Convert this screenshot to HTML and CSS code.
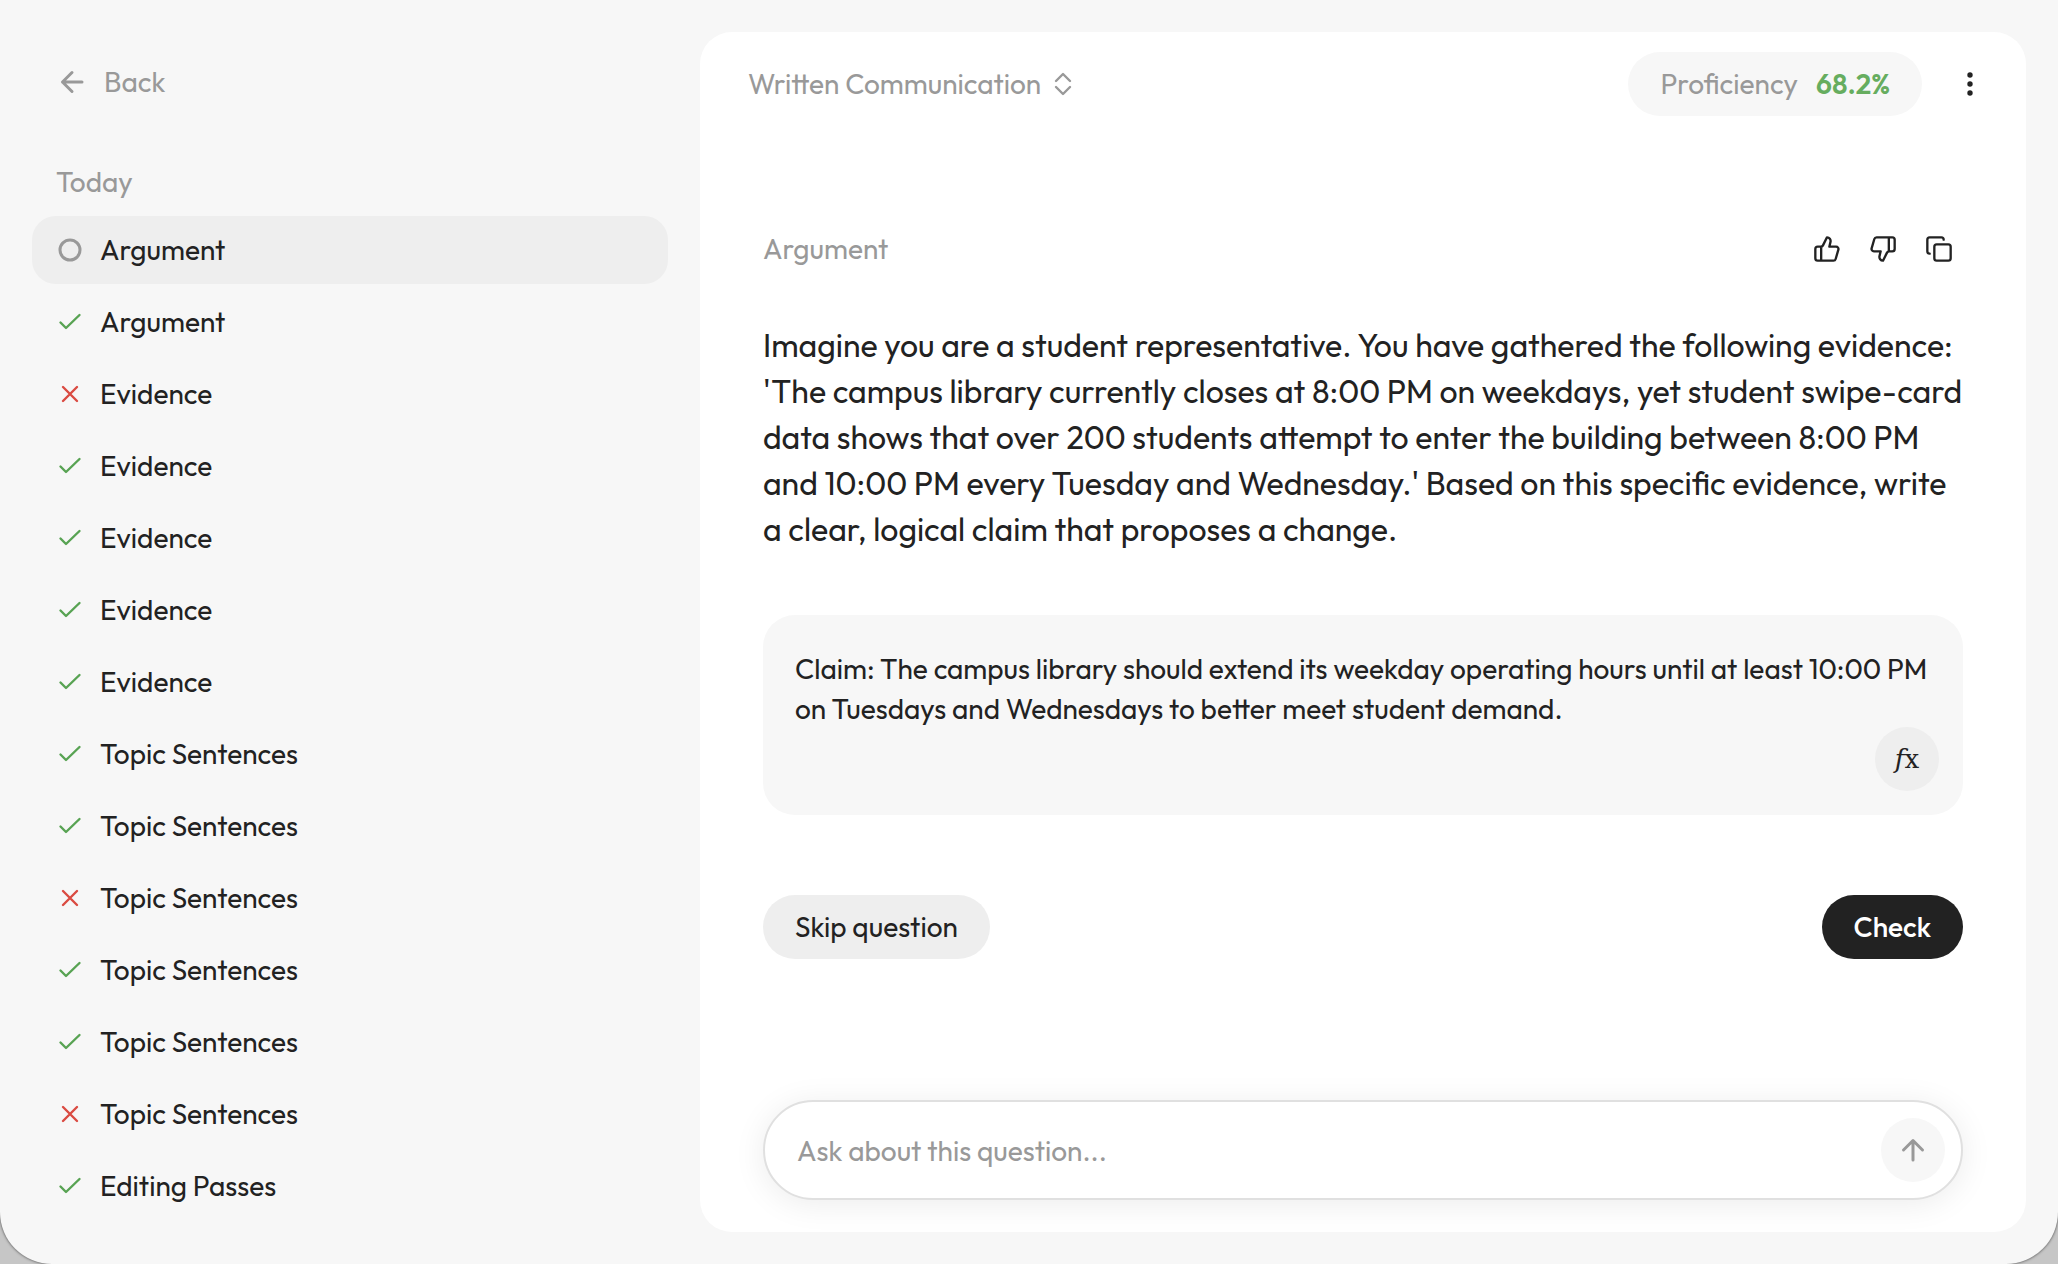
FILE: index.html
```html
<!DOCTYPE html>
<html lang="en">
<head>
<meta charset="utf-8">
<meta name="viewport" content="width=device-width, initial-scale=1">
<title>Written Communication</title>
<link rel="stylesheet" href="styles.css">
</head>
<body>
<svg class="sprite" aria-hidden="true">
  <symbol id="check" viewBox="0 0 28 28"><path d="M4.500 14.500 10 20 23.500 7"/></symbol>
  <symbol id="cross" viewBox="0 0 28 28"><path d="M7 7 21 21M21 7 7 21"/></symbol>
  <symbol id="ring" viewBox="0 0 28 28"><circle cx="14" cy="14" r="10"/></symbol>
</svg>
<div class="app">
  <aside class="sidebar">
    <a class="back" href="#">
      <svg class="icon" viewBox="0 0 28 28" aria-hidden="true"><path d="M24 14H4.500M14 4.500 4.500 14l9.500 9.500"/></svg>
      Back
    </a>
    <h2 class="group">Today</h2>
    <nav class="history" aria-label="Today">
      <a class="item current" href="#"><svg class="icon"><use href="#ring"/></svg>Argument</a>
      <a class="item right" href="#"><svg class="icon"><use href="#check"/></svg>Argument</a>
      <a class="item wrong" href="#"><svg class="icon"><use href="#cross"/></svg>Evidence</a>
      <a class="item right" href="#"><svg class="icon"><use href="#check"/></svg>Evidence</a>
      <a class="item right" href="#"><svg class="icon"><use href="#check"/></svg>Evidence</a>
      <a class="item right" href="#"><svg class="icon"><use href="#check"/></svg>Evidence</a>
      <a class="item right" href="#"><svg class="icon"><use href="#check"/></svg>Evidence</a>
      <a class="item right" href="#"><svg class="icon"><use href="#check"/></svg>Topic Sentences</a>
      <a class="item right" href="#"><svg class="icon"><use href="#check"/></svg>Topic Sentences</a>
      <a class="item wrong" href="#"><svg class="icon"><use href="#cross"/></svg>Topic Sentences</a>
      <a class="item right" href="#"><svg class="icon"><use href="#check"/></svg>Topic Sentences</a>
      <a class="item right" href="#"><svg class="icon"><use href="#check"/></svg>Topic Sentences</a>
      <a class="item wrong" href="#"><svg class="icon"><use href="#cross"/></svg>Topic Sentences</a>
      <a class="item right" href="#"><svg class="icon"><use href="#check"/></svg>Editing Passes</a>
    </nav>
  </aside>
  <main class="panel">
    <header class="topbar">
      <button class="subject" type="button">
        Written Communication
        <svg class="icon" viewBox="0 0 28 28" aria-hidden="true"><path d="M7 11l7-7 7 7M7 17l7 7 7-7"/></svg>
      </button>
      <div class="proficiency">Proficiency <strong>68.2%</strong></div>
      <button class="menu" type="button" aria-label="More options">
        <svg class="dots" viewBox="0 0 32 32" aria-hidden="true"><circle cx="16" cy="7" r="2.700"/><circle cx="16" cy="16" r="2.700"/><circle cx="16" cy="25" r="2.700"/></svg>
      </button>
    </header>
    <div class="content">
      <div class="question-head">
        <h1 class="topic">Argument</h1>
        <button class="tool" type="button" aria-label="Good question"><svg class="icon" viewBox="0 0 24 24" aria-hidden="true"><path d="M7 10v12M15 5.880 14 10h5.830a2 2 0 0 1 1.920 2.560l-2.330 8A2 2 0 0 1 17.500 22H4a2 2 0 0 1-2-2v-8a2 2 0 0 1 2-2h2.760a2 2 0 0 0 1.790-1.110L12 2a3.130 3.130 0 0 1 3 3.880Z"/></svg></button>
        <button class="tool" type="button" aria-label="Bad question"><svg class="icon" viewBox="0 0 24 24" aria-hidden="true"><path d="M17 14V2M9 18.120 10 14H4.170a2 2 0 0 1-1.920-2.560l2.330-8A2 2 0 0 1 6.500 2H20a2 2 0 0 1 2 2v8a2 2 0 0 1-2 2h-2.760a2 2 0 0 0-1.790 1.110L12 22a3.130 3.130 0 0 1-3-3.880Z"/></svg></button>
        <button class="tool" type="button" aria-label="Copy question"><svg class="icon" viewBox="0 0 24 24" aria-hidden="true"><rect x="8" y="8" width="14" height="14" rx="2"/><path d="M4 16a2 2 0 0 1-2-2V4a2 2 0 0 1 2-2h10a2 2 0 0 1 2 2"/></svg></button>
      </div>
      <p class="question">Imagine you are a student representative. You have gathered the following evidence: 'The campus library currently closes at 8:00 PM on weekdays, yet student swipe-card data shows that over 200 students attempt to enter the building between 8:00 PM and 10:00 PM every Tuesday and Wednesday.' Based on this specific evidence, write a clear, logical claim that proposes a change.</p>
      <div class="answer">
        <textarea class="answer-text" aria-label="Your answer">Claim: The campus library should extend its weekday operating hours until at least 10:00 PM on Tuesdays and Wednesdays to better meet student demand.</textarea>
        <button class="formula" type="button" aria-label="Insert formula"><i>f</i>x</button>
      </div>
      <div class="actions">
        <button class="pill skip" type="button">Skip question</button>
        <button class="pill submit" type="button">Check</button>
      </div>
      <form class="ask">
        <input class="ask-input" type="text" aria-label="Ask about this question" placeholder="Ask about this question...">
        <button class="send" type="button" aria-label="Send"><svg class="icon" viewBox="0 0 28 28" aria-hidden="true"><path d="M14 24V4.500M4.500 14 14 4.500l9.500 9.500"/></svg></button>
      </form>
    </div>
  </main>
</div>
</body>
</html>
```
FILE: styles.css
```css
* { box-sizing: border-box; }
body {
  margin: 0;
  background: #c6c6c6;
  color: #222;
  font: 28px/40px Outfit, Lato, sans-serif;
}
button, input, textarea {
  margin: 0;
  padding: 0;
  border: 0;
  background: none;
  color: inherit;
  font: inherit;
}
button { cursor: pointer; }
a { color: inherit; text-decoration: none; }
h1, h2, p { margin: 0; font-weight: 400; }
.sprite { display: none; }
.icon {
  flex: none;
  width: 28px;
  height: 28px;
  fill: none;
  stroke: currentColor;
  stroke-width: 3;
  stroke-linecap: round;
  stroke-linejoin: round;
}
.app {
  display: flex;
  min-height: 100vh;
  padding: 32px;
  gap: 32px;
  background: #f7f7f7;
  border-radius: 0 0 52px 52px;
  box-shadow: 0 0 3px rgba(0, 0, 0, .7);
}

/* Sidebar */
.sidebar { flex: 0 0 636px; }
.back {
  display: flex;
  align-items: center;
  gap: 18px;
  height: 100px;
  padding: 0 26px;
  color: #999;
}
.group {
  padding: 30px 24px 14px;
  color: #999;
  font-size: 28px;
}
.history { display: grid; gap: 4px; }
.item {
  display: flex;
  align-items: center;
  gap: 16px;
  height: 68px;
  padding: 0 24px;
  border-radius: 24px;
}
.item .icon { stroke-width: 2.4; }
.item.current { background: #eee; }
.current .icon { color: #999; stroke-width: 3; }
.right .icon { color: #58a353; }
.wrong .icon { color: #da4b42; }

/* Main panel */
.panel {
  display: flex;
  flex: 1;
  flex-direction: column;
  min-width: 0;
  background: #fff;
  border-radius: 32px;
}
.topbar {
  display: flex;
  align-items: center;
  padding: 20px 24px 20px 48px;
}
.subject {
  display: flex;
  align-items: center;
  gap: 8px;
  margin-right: auto;
  color: #999;
}
.subject .icon { stroke-width: 2.4; }
.proficiency {
  display: flex;
  align-items: center;
  gap: 18px;
  height: 64px;
  padding: 0 32px;
  border-radius: 32px;
  background: #f7f7f7;
  color: #999;
}
.proficiency strong { color: #66ad5f; font-weight: 600; }
.menu {
  display: grid;
  place-items: center;
  width: 64px;
  height: 64px;
  margin-left: 16px;
}
.dots { width: 32px; height: 32px; fill: #222; }
.content {
  display: flex;
  flex: 1;
  flex-direction: column;
  width: 100%;
  max-width: 1264px;
  margin: 0 auto;
  padding: 80px 32px 32px;
}
.question-head {
  display: flex;
  align-items: center;
  gap: 8px;
  height: 66px;
}
.topic { margin-right: auto; color: #999; font-size: 28px; }
.tool {
  display: grid;
  place-items: center;
  width: 48px;
  height: 48px;
}
.tool .icon { stroke-width: 2; }
.question {
  padding: 40px 0 63px;
  font-size: 32px;
  line-height: 46px;
}
.answer {
  display: flex;
  position: relative;
  border-radius: 32px;
  background: #f7f7f7;
}
.answer-text {
  display: block;
  flex: 1;
  height: 200px;
  padding: 34px 32px;
  resize: none;
  outline: 0;
}
.formula {
  position: absolute;
  right: 24px;
  bottom: 24px;
  width: 64px;
  height: 64px;
  border-radius: 50%;
  background: #eee;
  font: 26px/64px "DejaVu Serif", serif;
}
.actions {
  display: flex;
  justify-content: space-between;
  padding: 80px 0;
}
.pill {
  height: 64px;
  padding: 0 32px;
  border-radius: 32px;
}
.skip { background: #eee; }
.submit { background: #222; color: #fff; font-weight: 500; }
.ask {
  display: flex;
  align-items: center;
  height: 100px;
  margin-top: auto;
  padding: 0 16px 0 32px;
  border: 2px solid #e0e0e0;
  border-radius: 50px;
  background: #fff;
  box-shadow: 0 4px 32px rgba(0, 0, 0, .08);
}
.ask-input { flex: 1; min-width: 0; height: 64px; outline: 0; }
.ask-input::placeholder { color: #999; opacity: 1; }
.send {
  display: grid;
  place-items: center;
  width: 64px;
  height: 64px;
  border-radius: 50%;
  background: #f7f7f7;
  color: #999;
}
```
